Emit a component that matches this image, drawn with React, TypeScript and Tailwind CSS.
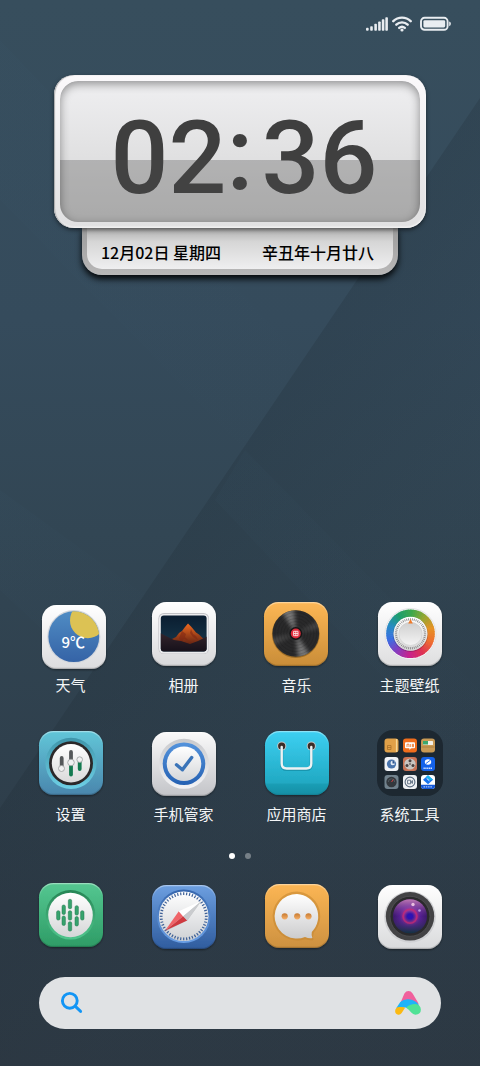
import type { ReactNode } from 'react';

type TileProps = {
  id: string;
  x?: number;
  y?: number;
  from: string;
  to: string;
  children: ReactNode;
};

// Rounded 64px tile shared by all the launcher icons
const Tile = ({ id, x = 4, y = 4, from, to, children }: TileProps) => (
  <svg viewBox="0 0 72 72" className="w-18 h-18 overflow-visible" aria-hidden="true">
    <defs>
      <linearGradient id={`${id}-bg`} x1="0" y1="0" x2="0" y2="1">
        <stop offset="0" stopColor={from} />
        <stop offset="1" stopColor={to} />
      </linearGradient>
      <linearGradient id={`${id}-edge`} x1="0" y1="0" x2="0" y2="1">
        <stop offset="0" stopColor="#fff" stopOpacity="0.4" />
        <stop offset="0.2" stopColor="#fff" stopOpacity="0" />
        <stop offset="0.85" stopColor="#000" stopOpacity="0" />
        <stop offset="1" stopColor="#000" stopOpacity="0.2" />
      </linearGradient>
      <filter id={`${id}-shadow`} x="-20%" y="-20%" width="140%" height="140%">
        <feDropShadow dx="0" dy="1" stdDeviation="1" floodColor="#000" floodOpacity="0.45" />
      </filter>
    </defs>
    <rect x={x} y={y} width="64" height="64" rx="14.5" fill={`url(#${id}-bg)`} filter={`url(#${id}-shadow)`} />
    <rect x={x + 0.6} y={y + 0.6} width="62.8" height="62.8" rx="14" fill="none" stroke={`url(#${id}-edge)`} strokeWidth="1.2" />
    {children}
  </svg>
);

type GradProps = { id: string; from: string; to: string };

const Grad = ({ id, from, to }: GradProps) => (
  <linearGradient id={id} x1="0" y1="0" x2="0" y2="1">
    <stop offset="0" stopColor={from} />
    <stop offset="1" stopColor={to} />
  </linearGradient>
);

const WeatherIcon = () => (
  <Tile id="weather" x={7} y={7} from="#ffffff" to="#dcdcde">
    <defs>
      <Grad id="weather-sky" from="#4f8cc4" to="#3563a6" />
      <clipPath id="weather-clip">
        <circle cx="38.8" cy="38.7" r="25.4" />
      </clipPath>
    </defs>
    <circle cx="38.8" cy="38.7" r="26.6" fill="#d2d6dc" />
    <circle cx="38.8" cy="38.7" r="25.4" fill="url(#weather-sky)" />
    <circle cx="52.8" cy="22.4" r="17.8" fill="#dcc254" clipPath="url(#weather-clip)" />
    <text x="26.5" y="49.5" fontSize="15" fontWeight="500" fill="#fff" fontFamily="'Noto Sans CJK SC', sans-serif">
      9℃
    </text>
  </Tile>
);

const AlbumIcon = () => (
  <Tile id="album" from="#ffffff" to="#d8d8da">
    <defs>
      <Grad id="album-sky" from="#0a1d30" to="#1a3c50" />
      <Grad id="album-peak" from="#f06a20" to="#5c1f12" />
      <Grad id="album-ground" from="#33242b" to="#120e18" />
      <clipPath id="album-clip">
        <rect x="12.8" y="17.4" width="45.8" height="36" rx="3" />
      </clipPath>
    </defs>
    <rect x="10.4" y="15" width="50.6" height="41" rx="5.5" fill="#c2c2c6" />
    <rect x="11" y="16" width="49.4" height="39.6" rx="5" fill="#ececee" />
    <g clipPath="url(#album-clip)">
      <rect x="12" y="17" width="48" height="38" fill="url(#album-sky)" />
      <path d="M24 41l4-2 3-4 3-2 3-4 3-3.500 3 3 3 3.500 2 2.500 3 2 4 4 3 3v4H24z" fill="url(#album-peak)" />
      <path d="M34 33l4 3-1 3 4 4-5-2-3 3-2-4zM43 31l2 5 3 2 2 4-5-3-3-4z" fill="#7d2412" opacity="0.55" />
      <path d="M12 35l6 3 8 4 7 1 9 3 8-3 10-5v18H12z" fill="url(#album-ground)" />
    </g>
  </Tile>
);

const MusicIcon = () => (
  <Tile id="music" x={3} from="#fdb755" to="#c98d38">
    <defs>
      <filter id="music-blur" x="-20%" y="-20%" width="140%" height="140%">
        <feGaussianBlur stdDeviation="2.2" />
      </filter>
      <clipPath id="music-clip">
        <circle cx="34.8" cy="35.5" r="23.3" />
      </clipPath>
    </defs>
    <circle cx="34.8" cy="36.1" r="23.9" fill="#7b5317" opacity="0.6" />
    <circle cx="34.8" cy="35.5" r="23.3" fill="#29292a" />
    <g clipPath="url(#music-clip)">
      <g filter="url(#music-blur)" fill="#8b8b8b" opacity="0.8">
        <path d="M34.8 35.500L19 11h14z" />
        <path d="M34.8 35.500L51 60H37z" />
        <path d="M34.8 35.500L59 22v8z" opacity="0.4" />
        <path d="M34.8 35.500L10 49v-9z" opacity="0.4" />
      </g>
      {[9, 12, 15, 18, 21].map((r) => (
        <circle key={r} cx="34.8" cy="35.5" r={r} fill="none" stroke="#111" strokeOpacity="0.2" strokeWidth="0.7" />
      ))}
    </g>
    <circle cx="34.8" cy="35.5" r="6.4" fill="#151515" />
    <circle cx="34.8" cy="35.5" r="5" fill="#de2c3c" />
    <path d="M32.600 33.300h4.400v4.400h-4.400zM34.800 33v5M32.500 35.500h4.600" fill="none" stroke="#ffe1e1" strokeWidth="0.9" />
  </Tile>
);

// Hues around the theme wheel, clockwise from the top
const rainbow = [
  [62, 168, 76],
  [148, 166, 50],
  [230, 146, 36],
  [238, 110, 48],
  [222, 50, 84],
  [200, 34, 140],
  [134, 60, 190],
  [58, 110, 226],
  [40, 140, 196],
  [30, 158, 110],
];

const wheelColor = (t: number) => {
  const p = t * rainbow.length;
  const a = rainbow[Math.floor(p) % rainbow.length];
  const b = rainbow[(Math.floor(p) + 1) % rainbow.length];
  const f = p - Math.floor(p);
  return `rgb(${a.map((v, i) => Math.round(v + (b[i] - v) * f)).join(',')})`;
};

const ThemeIcon = () => {
  const steps = 60;
  return (
    <Tile id="theme" from="#ffffff" to="#dededf">
      <defs>
        <Grad id="theme-dial" from="#ffffff" to="#d6d6d6" />
        <Grad id="theme-knob" from="#cfcfcf" to="#f4f4f4" />
      </defs>
      <circle cx="36.500" cy="36" r="25.600" fill="#f3f3f5" stroke="#d9d9dc" strokeWidth="0.600" />
      {Array.from({ length: steps }, (_, i) => {
        const a0 = (i / steps) * Math.PI * 2;
        const a1 = ((i + 1.3) / steps) * Math.PI * 2;
        const r = 20.5;
        return (
          <path
            key={i}
            d={`M${36.5 + r * Math.sin(a0)} ${35.8 - r * Math.cos(a0)}A${r} ${r} 0 0 1 ${36.5 + r * Math.sin(a1)} ${35.8 - r * Math.cos(a1)}`}
            stroke={wheelColor(i / steps)}
            strokeWidth="7.6"
            fill="none"
          />
        );
      })}
      <circle cx="36.5" cy="36.3" r="17.6" fill="#000" opacity="0.18" />
      <circle cx="36.5" cy="35.8" r="17" fill="url(#theme-dial)" />
      {Array.from({ length: 48 }, (_, i) => (
        <path key={i} d="M36.5 20.200v2.200" stroke="#8d8d8d" strokeWidth="0.9" transform={`rotate(${i * 7.5} 36.5 35.8)`} />
      ))}
      <circle cx="36.5" cy="35.8" r="11.6" fill="url(#theme-knob)" stroke="#c9c9c9" strokeWidth="0.5" />
      <path d="M36.500 21l2.300 4.600h-4.600z" fill="#ee7a2a" />
    </Tile>
  );
};

const SettingsIcon = () => (
  <Tile id="settings" from="#61c6d8" to="#4a86ad">
    <defs>
      <Grad id="settings-well" from="#3f95aa" to="#6ed0e6" />
      <Grad id="settings-face" from="#ffffff" to="#dadada" />
    </defs>
    <circle cx="36" cy="36.3" r="25.6" fill="url(#settings-well)" />
    <circle cx="36" cy="36.3" r="22" fill="#2b2829" />
    <circle cx="36" cy="36.3" r="19.2" fill="url(#settings-face)" />
    <g strokeWidth="3.8" strokeLinecap="round">
      <path d="M26.700 31v11" stroke="#55585a" />
      <path d="M36 25v9" stroke="#55585a" />
      <path d="M36 38v9.500" stroke="#147a50" />
      <path d="M44.700 35v7" stroke="#147a50" />
    </g>
    <g fill="#f1f1f1" stroke="#9b9d9e" strokeWidth="0.8">
      <circle cx="26.5" cy="41.500" r="3" />
      <circle cx="36" cy="35.500" r="3.300" />
      <circle cx="44.700" cy="32.600" r="2.800" />
    </g>
  </Tile>
);

const ManagerIcon = () => (
  <Tile id="manager" y={5} from="#fafafa" to="#c3c4c8">
    <defs>
      <Grad id="manager-well" from="#c9cacd" to="#f3f3f5" />
      <Grad id="manager-ring" from="#5493dc" to="#2561b3" />
      <Grad id="manager-face" from="#ffffff" to="#d4d6d9" />
    </defs>
    <circle cx="36" cy="36.8" r="25" fill="url(#manager-well)" />
    <circle cx="36" cy="36.8" r="21.3" fill="url(#manager-ring)" />
    <circle cx="36" cy="36.800" r="17.300" fill="url(#manager-face)" />
    <path d="M28.500 37.800l5.900 5 9.300-12.300" fill="none" stroke="#3a74b8" strokeWidth="3.4" strokeLinecap="round" strokeLinejoin="round" />
  </Tile>
);

const StoreIcon = () => (
  <Tile id="store" from="#3dd0f2" to="#1aa0b8">
    <defs>
      <clipPath id="store-clip">
        <rect x="4" y="4" width="64" height="64" rx="14.5" />
      </clipPath>
      <Grad id="store-low" from="#1798ae" to="#128398" />
    </defs>
    <rect x="4" y="56.500" width="64" height="11.500" fill="url(#store-low)" opacity="0.6" clipPath="url(#store-clip)" />
    <circle cx="20.700" cy="19" r="4.600" fill="#bfc8ca" />
    <circle cx="50.300" cy="19" r="4.600" fill="#bfc8ca" />
    <circle cx="20.700" cy="19" r="3.600" fill="#3a2c26" />
    <circle cx="50.300" cy="19" r="3.600" fill="#3a2c26" />
    <path d="M20.700 21v16.500q0 5 5 5h19.600q5 0 5-5V21" fill="none" stroke="#0b7488" strokeOpacity="0.45" strokeWidth="3.200" strokeLinecap="round" />
    <path d="M20.700 20v16.500q0 5 5 5h19.600q5 0 5-5V20" fill="none" stroke="#eef2f3" strokeWidth="2.400" strokeLinecap="round" />
  </Tile>
);

const FolderIcon = () => (
  <svg viewBox="0 0 72 72" className="w-18 h-18" aria-hidden="true">
    <rect x="3" y="3" width="66" height="66" rx="16" fill="#1d2831" />
    <g>
      <rect x="10.500" y="11.500" width="14" height="14" rx="3" fill="#e0a048" />
      <path d="M22.600 12v13" stroke="#f5d596" strokeWidth="1.400" />
      <path d="M13.500 18.500h3.500v4h-3.500zM13.500 20.500h3.500" fill="none" stroke="#a8702a" strokeWidth="0.800" />
    </g>
    <g>
      <rect x="29" y="11.500" width="14" height="14" rx="3" fill="#f06d1c" />
      <rect x="31" y="15.300" width="10" height="6" rx="1" fill="#fff" />
      <path d="M33 20v-2.800h2v2.800M36.700 17v3M38.500 17.200h1v2.600h-1z" fill="none" stroke="#f06d1c" strokeWidth="0.800" />
      <path d="M35 21.200h2.500l-2 1.500z" fill="#fff" />
    </g>
    <g>
      <rect x="47" y="11.500" width="14" height="14" rx="3" fill="#c99a55" />
      <rect x="49" y="14" width="10" height="4" rx="0.600" fill="#f3f1e9" />
      <path d="M49 14h5v3.500h-5z" fill="#3aa76d" />
      <path d="M47.500 20h13" stroke="#a5793b" strokeWidth="0.800" />
    </g>
    <g>
      <rect x="10.500" y="30" width="14" height="14" rx="3" fill="#f2f4f7" />
      <circle cx="17.500" cy="37" r="4.600" fill="#4a75ad" />
      <circle cx="18.800" cy="36" r="2.300" fill="#e6edf6" />
      <path d="M18.500 33.500a3 3 0 0 1 2.500 3h-2.500z" fill="#2c5590" />
    </g>
    <g>
      <rect x="29" y="30" width="14" height="14" rx="3" fill="#c97254" />
      <circle cx="36" cy="37" r="5.600" fill="#c9c4c0" />
      <g fill="#4b4140">
        <circle cx="36" cy="33.800" r="1.500" />
        <circle cx="33" cy="38.600" r="1.500" />
        <circle cx="39" cy="38.600" r="1.500" />
      </g>
      <circle cx="36" cy="37" r="1" fill="#7a6c68" />
    </g>
    <g>
      <rect x="47" y="30" width="14" height="14" rx="3" fill="#1462ea" />
      <ellipse cx="54" cy="35" rx="3.200" ry="2.800" fill="#fff" />
      <path d="M51.800 36.600l4.400-3.200" stroke="#1462ea" strokeWidth="0.900" />
      <path d="M49.500 41.300h9" stroke="#cfe0ff" strokeWidth="1.400" strokeDasharray="1.300 0.500" />
    </g>
    <g>
      <rect x="10.500" y="48" width="14" height="14" rx="3" fill="#71828d" />
      <circle cx="17.500" cy="55" r="5.200" fill="#33383d" />
      <path d="M14.300 55a3.200 3.200 0 0 1 6.400 0" fill="none" stroke="#5d666c" strokeWidth="0.700" />
      <path d="M17.500 55l1.800-2.400" stroke="#e34343" strokeWidth="0.900" />
    </g>
    <g>
      <rect x="29" y="48" width="14" height="14" rx="3" fill="#eff1f3" />
      <circle cx="36" cy="55" r="4.900" fill="none" stroke="#5b6c7f" strokeWidth="1.100" />
      <path d="M33.600 53.200h3v3.600h-3zM36.600 55l1.900-1.400v2.800z" fill="none" stroke="#5b6c7f" strokeWidth="0.900" />
    </g>
    <g>
      <rect x="47" y="48" width="14" height="14" rx="3" fill="#fff" />
      <path d="M47 57.800h14v1.200a3 3 0 0 1-3 3h-8a3 3 0 0 1-3-3z" fill="#1458d8" />
      <path d="M54 48.200l5 4.500-5 4.500-5-4.500z" fill="#1773ee" />
      <path d="M54 48.200l5 4.500-3.500.6-3.500-3.200z" fill="#19b8f0" />
      <path d="M52.600 51.300l2.800 2.500" stroke="#fff" strokeWidth="0.900" />
      <path d="M49.500 59.900h9" stroke="#cfe0ff" strokeWidth="1" strokeDasharray="1.500 0.800" />
    </g>
  </svg>
);

const waveBars = [
  [23.3, 31.7],
  [28.7, 26],
  [28.7, 37],
  [35, 20.3],
  [35, 31.7],
  [35, 42.7],
  [41.7, 26.7],
  [41.7, 37.6],
  [47.3, 31.7],
];

const RecorderIcon = () => (
  <Tile id="recorder" from="#55c791" to="#2e9c66">
    <defs>
      <Grad id="recorder-well" from="#268555" to="#50c68d" />
      <Grad id="recorder-face" from="#ffffff" to="#d5d6d7" />
    </defs>
    <circle cx="35.500" cy="35.800" r="24.800" fill="url(#recorder-well)" />
    <circle cx="35.500" cy="36" r="22.300" fill="url(#recorder-face)" />
    {waveBars.map(([x, y]) => (
      <rect key={`${x}-${y}`} x={x - 1.7} y={y} width="3.4" height="9.4" rx="1.5" fill="#36a36d" stroke="#23794e" strokeWidth="0.5" />
    ))}
  </Tile>
);

const CompassIcon = () => (
  <Tile id="compass" y={6} from="#6d9fe0" to="#2f5c9e">
    <defs>
      <Grad id="compass-well" from="#3767ad" to="#6ba0e6" />
      <Grad id="compass-face" from="#ffffff" to="#cfd1d4" />
    </defs>
    <circle cx="35.700" cy="37.300" r="26.800" fill="url(#compass-well)" />
    <circle cx="35.700" cy="37.300" r="24.800" fill="url(#compass-face)" />
    {Array.from({ length: 48 }, (_, i) => (
      <path key={i} d="M35.700 13.300v2.800" stroke="#3c5f96" strokeWidth="1.200" transform={`rotate(${i * 7.5} 35.700 37.300)`} />
    ))}
    <path d="M17 52.500l22.500-11.300 14-19.200z" fill="#000" opacity="0.16" />
    <path d="M17 51.700L30.800 32.300l4.400 4.900z" fill="#ef6468" />
    <path d="M17 51.700l18.200-14.500 4 4.300z" fill="#cf3a40" />
    <path d="M53.300 22L30.800 32.300l4.400 4.900z" fill="#ffffff" />
    <path d="M53.300 22L35.200 37.200l4 4.300z" fill="#c9cbce" />
  </Tile>
);

const MessageIcon = () => (
  <Tile id="message" y={5} from="#fcb654" to="#cd9140">
    <defs>
      <Grad id="message-bubble" from="#ffffff" to="#cccccd" />
      <Grad id="message-dot" from="#c77a30" to="#f5b06a" />
    </defs>
    <path d="M36 12.500a24.500 24.500 0 1 0 8 47.700q5 1.500 8.500.8-1-3 .3-7.500A24.500 24.500 0 0 0 36 12.500z" fill="#c3852f" opacity="0.55" />
    <path d="M36 15a22.300 22.300 0 1 0 8 43.100q4.500 1.800 7.400.9-1.300-2.700-.6-6.100A22.300 22.300 0 0 0 36 15z" fill="url(#message-bubble)" />
    <circle cx="23.700" cy="37.300" r="3.100" fill="url(#message-dot)" />
    <circle cx="36.200" cy="37.300" r="3.100" fill="url(#message-dot)" />
    <circle cx="47.500" cy="37.300" r="3.100" fill="url(#message-dot)" />
  </Tile>
);

const CameraIcon = () => (
  <Tile id="camera" y={6} from="#ffffff" to="#d9dadc">
    <defs>
      <radialGradient id="camera-lens" cx="0.5" cy="0.5" r="0.5">
        <stop offset="0" stopColor="#3a12c8" />
        <stop offset="0.22" stopColor="#3316a0" />
        <stop offset="0.36" stopColor="#a02a86" />
        <stop offset="0.6" stopColor="#4a1c8c" />
        <stop offset="1" stopColor="#2a1458" />
      </radialGradient>
      <linearGradient id="camera-glare" x1="0" y1="0" x2="0" y2="1">
        <stop offset="0" stopColor="#d98ac4" stopOpacity="0.85" />
        <stop offset="0.5" stopColor="#7a2ba8" stopOpacity="0.2" />
        <stop offset="1" stopColor="#0d3a3c" stopOpacity="0.85" />
      </linearGradient>
    </defs>
    <circle cx="36" cy="38" r="25.8" fill="#d0d1d4" />
    <circle cx="36" cy="37.300" r="24.200" fill="#434345" />
    <circle cx="36" cy="37.300" r="20" fill="#2a2a2c" stroke="#525254" strokeWidth="0.800" />
    <circle cx="36" cy="37.300" r="17" fill="url(#camera-lens)" />
    <circle cx="36" cy="37.300" r="17" fill="url(#camera-glare)" />
    <circle cx="36" cy="37.300" r="7" fill="none" stroke="#c92a72" strokeWidth="1.600" opacity="0.7" />
    <circle cx="36" cy="37.300" r="3" fill="#2d12b4" />
    <circle cx="39" cy="25.500" r="1.700" fill="#ffd9ee" opacity="0.8" />
    <circle cx="45.500" cy="31.500" r="1.300" fill="#d8c2ff" opacity="0.7" />
  </Tile>
);

const apps = [
  { nome: '天气', Icon: WeatherIcon },
  { nome: '相册', Icon: AlbumIcon },
  { nome: '音乐', Icon: MusicIcon },
  { nome: '主题壁纸', Icon: ThemeIcon },
  { nome: '设置', Icon: SettingsIcon },
  { nome: '手机管家', Icon: ManagerIcon },
  { nome: '应用商店', Icon: StoreIcon },
  { nome: '系统工具', Icon: FolderIcon },
];

const dock = [
  { nome: '录音机', Icon: RecorderIcon },
  { nome: '浏览器', Icon: CompassIcon },
  { nome: '短信', Icon: MessageIcon },
  { nome: '相机', Icon: CameraIcon },
];

const Wallpaper = () => (
  <svg viewBox="0 0 480 1066" preserveAspectRatio="none" className="absolute inset-0 w-full h-full -z-10" aria-hidden="true">
    <defs>
      <linearGradient id="wall-base" x1="0" y1="0" x2="0" y2="1">
        <stop offset="0" stopColor="#374e5d" />
        <stop offset="0.3" stopColor="#354b5c" />
        <stop offset="0.5" stopColor="#324654" />
        <stop offset="0.7" stopColor="#2f404d" />
        <stop offset="0.85" stopColor="#2e3c48" />
        <stop offset="1" stopColor="#2e3a45" />
      </linearGradient>
      <linearGradient id="wall-shade" gradientUnits="userSpaceOnUse" x1="240" y1="450" x2="420" y2="572">
        <stop offset="0" stopColor="#1d2932" stopOpacity="0.22" />
        <stop offset="1" stopColor="#1d2932" stopOpacity="0.08" />
      </linearGradient>
      <linearGradient id="wall-band" x1="0" y1="0" x2="1" y2="1">
        <stop offset="0" stopColor="#3c5a70" stopOpacity="0.08" />
        <stop offset="1" stopColor="#3c5a70" stopOpacity="0" />
      </linearGradient>
    </defs>
    <rect width="480" height="1066" fill="url(#wall-base)" />
    <path d="M0 40L300 355 245 450 0 200z" fill="url(#wall-band)" />
    <path d="M0 490L145 595 90 675 0 590z" fill="url(#wall-band)" />
    <path d="M480 98L0 808v258h480z" fill="url(#wall-shade)" />
    <path d="M245 450L480 690v90L215 500z" fill="url(#wall-band)" />
  </svg>
);

const StatusBar = () => (
  <header className="flex justify-end items-center gap-1 h-12 pr-7 text-[#e9edf1]">
    <svg viewBox="0 0 23 16" className="w-[22px] h-4" fill="currentColor" aria-label="信号">
      <rect x="0" y="12" width="2.800" height="3" rx="1" />
      <rect x="4.400" y="10.300" width="2.700" height="4.700" rx="0.800" />
      <rect x="8.700" y="7.800" width="2.700" height="7.200" rx="0.800" />
      <rect x="12.700" y="5.500" width="2.700" height="9.500" rx="0.800" />
      <rect x="16.500" y="3" width="2.700" height="12" rx="0.800" />
      <rect x="20.200" y="1" width="2.700" height="14" rx="0.800" />
    </svg>
    <svg viewBox="0 0 20 16" className="w-5 h-4" fill="none" stroke="currentColor" strokeWidth="2.400" strokeLinecap="round" aria-label="无线网络">
      <path d="M1.300 5.200a12.400 12.400 0 0 1 17.400 0" />
      <path d="M4.300 8.700a8.200 8.200 0 0 1 11.400 0" />
      <path d="M7.200 11.900a4.200 4.200 0 0 1 5.600 0" />
      <circle cx="10" cy="14" r="1.600" fill="currentColor" stroke="none" />
    </svg>
    <svg viewBox="0 0 32 16" className="w-8 h-4 ml-1" aria-label="电量">
      <rect x="1" y="1.800" width="26.600" height="12" rx="3.600" fill="none" stroke="currentColor" strokeWidth="1.900" />
      <rect x="3.400" y="4.200" width="21.800" height="7.200" rx="1.400" fill="currentColor" />
      <path d="M29.200 5.400q1.700.4 1.700 2.400t-1.700 2.400z" fill="currentColor" />
    </svg>
  </header>
);

const ClockWidget = () => (
  <section className="mx-[54px] mt-[27px] font-['Noto_Sans_CJK_SC',sans-serif]">
    <div className="relative z-10 rounded-[20px] p-[6px] bg-linear-to-b from-[#fbf9fb] to-[#e0e0e1] shadow-[0_2px_4px_rgba(0,0,0,0.5),inset_1px_0_1px_#a9a9aa,inset_0_-1px_2px_#ffffff]">
      <div className="relative h-[141px] overflow-hidden rounded-[18px] flex items-center justify-center bg-linear-to-b from-[#efeff1] to-[#d4d4d4]">
        <time className="flex items-center font-[Roboto] font-medium text-[102px] leading-[120px] text-[#3f3f3f] pl-2 pt-3">
          <span>02</span>
          <span className="pb-2 pr-2">:</span>
          <span>36</span>
        </time>
        {/* metade inferior do visor, mais escura */}
        <div className="absolute inset-x-0 bottom-0 top-[79px] bg-[#4a4a4a]/30" />
        <div className="absolute inset-0 rounded-[18px] shadow-[inset_0_3px_10px_rgba(0,0,0,0.4)]" />
      </div>
    </div>
    <div className="mx-7 h-12 -mt-px rounded-b-[20px] px-[5px] pb-[6px] bg-linear-to-b from-[#9b9b9b] to-[#b9b8b8] shadow-[0_4px_6px_rgba(0,0,0,0.9)]">
      <div className="h-full rounded-b-[15px] pl-[14px] pr-[19px] pt-2 flex items-center justify-between bg-linear-to-b from-[#a9a9a9] via-[#d6d6d6] via-35% to-[#efeff0] text-base leading-5 font-medium text-black whitespace-nowrap">
        <span>12月02日 星期四</span>
        <span>辛丑年十月廿八</span>
      </div>
    </div>
  </section>
);

const SearchBar = () => (
  <form className="mx-[39px] mt-[26px] h-[52px] rounded-full bg-[#e0e2e4] flex items-center px-5" onSubmit={(e) => e.preventDefault()}>
    <button type="submit" aria-label="搜索">
      <svg viewBox="0 0 24 24" className="w-6 h-6" fill="none" stroke="#1295f5" strokeWidth="2.900" strokeLinecap="round" aria-hidden="true">
        <circle cx="10.800" cy="9.800" r="7.400" />
        <path d="M16.400 15.400l5.200 5" />
      </svg>
    </button>
    <input type="search" aria-label="搜索内容" className="flex-1 min-w-0 h-full px-3 bg-transparent outline-none" />
    <button type="button" aria-label="语音助手">
      <svg viewBox="0 0 75 70" className="w-[26px] h-6" aria-hidden="true">
        <path d="M27 7q5-7 12-7t12 7l16 27q3 6-2 6-22-12-50-4z" fill="#f0609c" />
        <path d="M3 50L15 32q10-9 24-8 20 1 31 18L44 56q-6-9-16-8z" fill="#1fb4f8" />
        <path d="M3 50q4-4 12-3 9-1 14 2L19 64q-4 6-10 5Q0 67 0 58q0-4 3-8z" fill="#fbb911" />
        <path d="M32 49q10-11 26-11 17 2 17 17 0 14-16 14-7 0-12-6-7-10-15-14z" fill="#4fe295" />
      </svg>
    </button>
  </form>
);

const App = () => {
  return (
    <div className="relative isolate min-h-screen flex flex-col overflow-hidden pb-[37px] text-white font-['Noto_Sans_CJK_SC',sans-serif]">
      <Wallpaper />
      <StatusBar />
      <ClockWidget />

      <main className="mt-auto pt-8 px-[14px] grid grid-cols-4 gap-y-8">
        {apps.map(({ nome, Icon }) => (
          <button key={nome} type="button" className="flex flex-col items-center gap-1">
            <Icon />
            <span className="text-[15px] leading-[21px] whitespace-nowrap text-[#f4f6f7]">{nome}</span>
          </button>
        ))}
      </main>

      <div className="flex justify-center gap-[10px] mt-[29px] h-[6px]">
        <span className="w-[6px] h-[6px] rounded-full bg-white" />
        <span className="w-[6px] h-[6px] rounded-full bg-white/35" />
      </div>

      {/* Barra fixa de atalhos */}
      <nav className="mt-5 px-[14px] grid grid-cols-4">
        {dock.map(({ nome, Icon }) => (
          <button key={nome} type="button" aria-label={nome} className="flex justify-center">
            <Icon />
          </button>
        ))}
      </nav>

      <SearchBar />
    </div>
  );
};

export default App;
